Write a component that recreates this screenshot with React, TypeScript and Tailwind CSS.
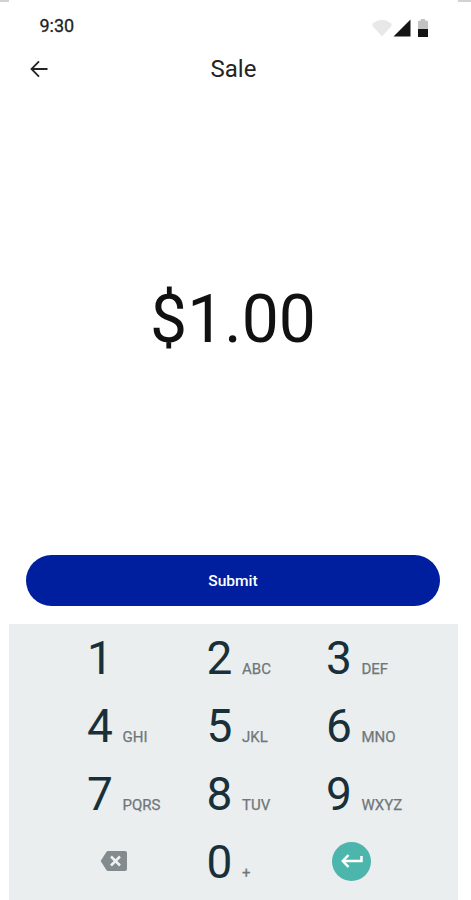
type PadKey = {
  digit: string;
  letters?: string;
};

const rows: PadKey[][] = [
  [{ digit: "1" }, { digit: "2", letters: "ABC" }, { digit: "3", letters: "DEF" }],
  [
    { digit: "4", letters: "GHI" },
    { digit: "5", letters: "JKL" },
    { digit: "6", letters: "MNO" },
  ],
  [
    { digit: "7", letters: "PQRS" },
    { digit: "8", letters: "TUV" },
    { digit: "9", letters: "WXYZ" },
  ],
];

function StatusBar() {
  return (
    <div className="flex h-12 items-center justify-between pr-[43px] pl-[39.5px]">
      <span className="text-[18px] leading-5 text-[#1f1f1f] [-webkit-text-stroke:0.3px_#1f1f1f]">9:30</span>
      <div className="flex items-center pt-1">
        <svg width="20" height="18" viewBox="0 0 20 18">
          <path d="M0.5 4.5Q10-2.8 19.5 4.5V7L10 17.5L0.5 7Z" fill="#e8e8e8" />
        </svg>
        <svg className="ml-px" width="18" height="18" viewBox="0 0 18 18">
          <path d="M17.5 0.5V17.5H0.5Z" fill="#141414" />
        </svg>
        <svg className="ml-[7px]" width="10" height="18" viewBox="0 0 10 18">
          <path d="M3 0H7V1.5H8.5Q10 1.5 10 3V10H0V3Q0 1.5 1.5 1.5H3Z" fill="#c2c2c2" />
          <path d="M0 10H10V18H0Z" fill="#141414" />
        </svg>
      </div>
    </div>
  );
}

function Header() {
  return (
    <header className="grid h-[38px] grid-cols-3 items-center pr-1">
      <button className="ml-[30px] w-5" aria-label="Back">
        <svg width="18" height="18" viewBox="0 0 18 18" fill="none" stroke="#242424" strokeWidth="1.8">
          <path d="M17.5 9H2M9 1.3L1.5 9L9 16.7" />
        </svg>
      </button>
      <h1 className="text-center text-[24px] leading-7 text-[#242424]">Sale</h1>
    </header>
  );
}

function DigitKey({ digit, letters }: PadKey) {
  return (
    <button className="flex h-[68px] items-baseline text-left">
      <span className="w-[35.5px] text-[46px] leading-[68px] text-[#183039]">{digit}</span>
      <span className="text-[15px] text-[#6f7779] [-webkit-text-stroke:0.25px_#6f7779]">{letters}</span>
    </button>
  );
}

function Keypad() {
  return (
    <div className="ml-[9px] h-[276px] w-[449px] bg-[#eaeeef] pl-[78px]">
      <div className="grid grid-cols-[119.5px_119.5px_1fr]">
        {rows.flat().map((key) => (
          <DigitKey key={key.digit} digit={key.digit} letters={key.letters} />
        ))}
        <button className="flex h-[68px] items-center pb-0.5 pl-[13px]" aria-label="Delete">
          <svg width="28" height="20" viewBox="0 0 28 20">
            <path d="M8 0H25Q27 0 27 2V18Q27 20 25 20H8Q7 20 6.3 19L0.7 10L6.3 1Q7 0 8 0Z" fill="#838b8e" />
            <path d="M11 5.5L20 14.5M20 5.5L11 14.5" stroke="#eef1f2" strokeWidth="2.5" />
          </svg>
        </button>
        <DigitKey digit="0" letters="+" />
        <button className="flex h-[68px] items-center pb-0.5 pl-[6px]" aria-label="Enter">
          <span className="flex size-[39px] items-center justify-center rounded-full bg-[#4db6ac]">
            <svg width="22" height="14" viewBox="0 0 22 14" fill="none" stroke="#fff" strokeWidth="2.5">
              <path d="M20.5 2V7H2.5M7.5 1L1.8 7L7.5 13" />
            </svg>
          </span>
        </button>
      </div>
    </div>
  );
}

export default function App() {
  return (
    <main className="flex h-[900px] w-[471px] flex-col overflow-hidden bg-white font-[Roboto,sans-serif]">
      <div className="flex h-0.5 justify-between">
        <span className="w-[9px] bg-[#d2d2d2]" />
        <span className="w-[13px] bg-[#d2d2d2]" />
      </div>
      <StatusBar />
      <Header />
      <section className="flex flex-1 items-center justify-center pr-[5px] pb-[3px]">
        <p className="text-[66px] leading-none text-[#111]">$1.00</p>
      </section>
      <div className="pr-[31px] pb-[18px] pl-[26px]">
        <button className="h-[51px] w-full rounded-full bg-[#001f9e] pt-0.5 text-[15.5px] font-medium text-white">
          Submit
        </button>
      </div>
      <Keypad />
    </main>
  );
}
